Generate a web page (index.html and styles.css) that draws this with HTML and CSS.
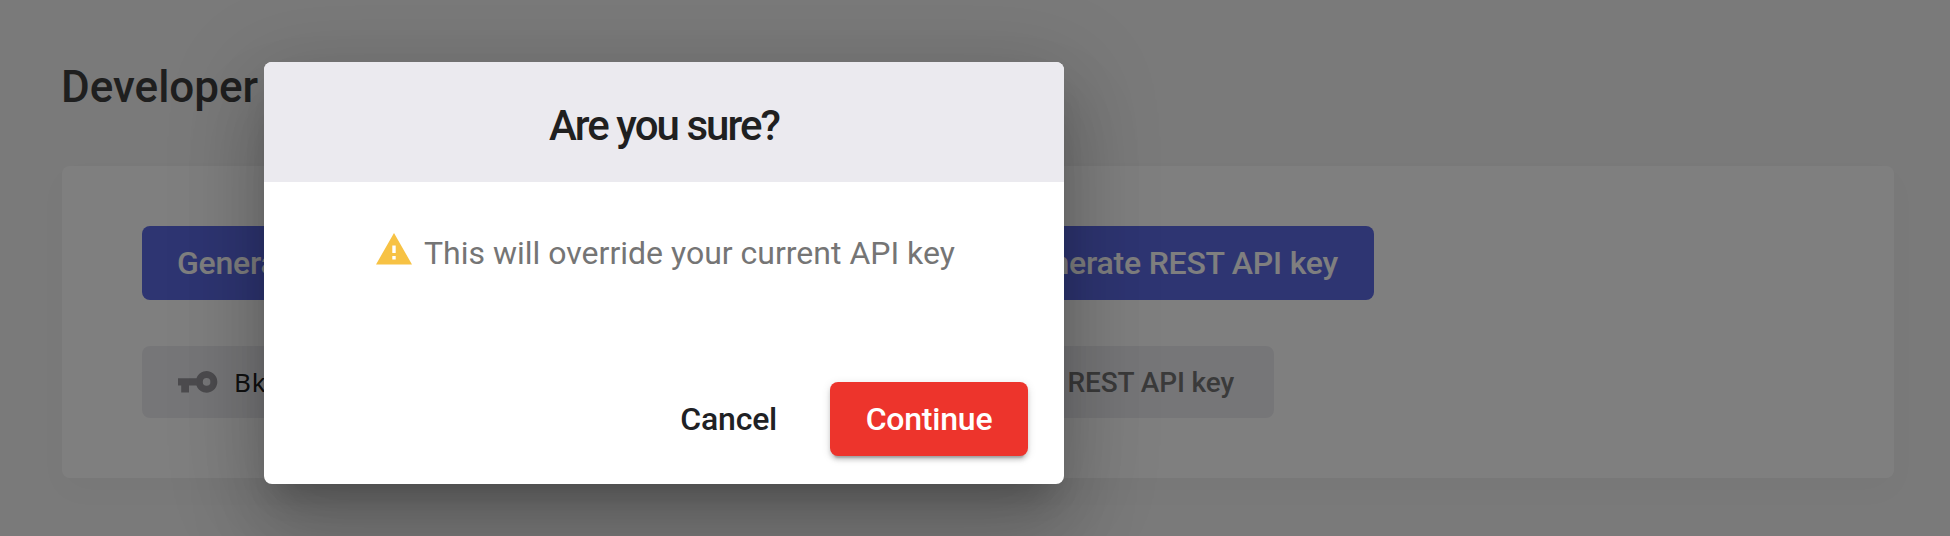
FILE: index.html
```html
<!DOCTYPE html>
<html lang="en">
<head>
<meta charset="utf-8">
<title>Developer</title>
<link rel="stylesheet" href="styles.css">
</head>
<body>
<main class="page">
  <h1 class="page-title">Developer</h1>
  <section class="card">
    <div class="key-column key-column-main">
      <button class="btn btn-primary">Generate API key</button>
      <div class="chip">
        <svg class="key-icon" viewBox="0 0 40 22"><path fill-rule="evenodd" d="M0 7.3H18.4A10.8 10.8 0 1 1 18.4 14.5H11V21.5H3.2V14.5H0ZM28.6 7.1a3.8 3.8 0 1 0 0 7.6a3.8 3.8 0 0 0 0-7.6Z"/></svg>
        <span class="key-value">Bk</span>
      </div>
    </div>
    <div class="key-column">
      <button class="btn btn-primary">Generate REST API key</button>
      <div class="chip chip-empty">No REST API key</div>
    </div>
  </section>
</main>
<div class="overlay">
  <div class="dialog" role="dialog">
    <h2 class="dialog-title">Are you sure?</h2>
    <div class="dialog-body">
      <svg class="warning-icon" viewBox="0 0 36 32"><path fill-rule="evenodd" d="M18 0L36 31.5H0ZM16.3 12.5V20H19.7V12.5ZM16.3 23V26.5H19.7V23Z"/></svg>
      <span>This will override your current API key</span>
    </div>
    <div class="dialog-actions">
      <button class="btn btn-text">Cancel</button>
      <button class="btn btn-danger">Continue</button>
    </div>
  </div>
</div>
</body>
</html>
```
FILE: styles.css
```css
* {
  box-sizing: border-box;
}

body {
  margin: 0;
  height: 536px;
  overflow: hidden;
  background: #f4f4f4;
  font-family: Roboto, "Liberation Sans", sans-serif;
}

.page {
  padding: 60px 56px 0 62px;
}

.page-title {
  margin: 0 0 52px -1px;
  font-size: 44px;
  line-height: 54px;
  font-weight: 500;
  color: #3e3e3e;
}

.card {
  display: flex;
  height: 312px;
  padding: 60px 80px;
  border-radius: 8px;
  background: #fff;
  box-shadow: 0 12px 32px rgba(0, 0, 0, 0.025);
}

.key-column {
  display: flex;
  flex-direction: column;
  align-items: flex-start;
  gap: 46px;
}

.key-column-main {
  width: 836px;
}

.btn {
  height: 74px;
  padding: 0 36px;
  border: 0;
  border-radius: 8px;
  font: 500 32px/74px Roboto, "Liberation Sans", sans-serif;
  letter-spacing: -0.22px;
  white-space: nowrap;
}

.btn-primary {
  padding-left: 35px;
  background: #5c6ae4;
  color: #fff;
}

.chip {
  display: flex;
  align-items: center;
  height: 72px;
  padding: 0 36px;
  border-radius: 8px;
  background: #ededf1;
}

.chip-empty {
  padding: 0 40px 0 47px;
  font-size: 28px;
  font-weight: 500;
  letter-spacing: -0.1px;
  color: #757575;
}

.key-icon {
  width: 40px;
  height: 22px;
  margin-right: 16px;
  fill: #98979d;
}

.key-value {
  width: 400px;
  font: 26px/36px "Noto Sans", sans-serif;
  letter-spacing: 0.8px;
  color: #202020;
}

.overlay {
  position: absolute;
  inset: 0;
  padding: 62px 0 0 264px;
  background: rgba(0, 0, 0, 0.5);
}

.dialog {
  width: 800px;
  height: 422px;
  border-radius: 8px;
  background: #fff;
  box-shadow:
    0 22px 30px -14px rgba(0, 0, 0, 0.2),
    0 48px 76px 6px rgba(0, 0, 0, 0.14),
    0 18px 92px 16px rgba(0, 0, 0, 0.12);
}

.dialog-title {
  height: 120px;
  margin: 0;
  padding-top: 4px;
  border-radius: 8px 8px 0 0;
  background: #ebeaef;
  color: #202020;
  font-size: 42px;
  line-height: 120px;
  font-weight: 500;
  letter-spacing: -1.95px;
  text-align: center;
}

.dialog-body {
  display: flex;
  height: 200px;
  padding: 51px 0 0 112px;
  color: #757575;
  font-size: 32px;
  line-height: 40px;
  white-space: nowrap;
}

.warning-icon {
  width: 36px;
  height: 32px;
  margin-right: 12px;
  fill: #f7c244;
}

.dialog-actions {
  display: flex;
  justify-content: flex-end;
  gap: 17px;
  padding-right: 36px;
}

.btn-text {
  background: transparent;
  color: #202124;
}

.btn-danger {
  width: 198px;
  padding: 0 35px;
  background: #ed342c;
  color: #fff;
  box-shadow:
    0 6px 2px -4px rgba(0, 0, 0, 0.2),
    0 4px 4px 0 rgba(0, 0, 0, 0.14),
    0 2px 10px 0 rgba(0, 0, 0, 0.12);
}
```
